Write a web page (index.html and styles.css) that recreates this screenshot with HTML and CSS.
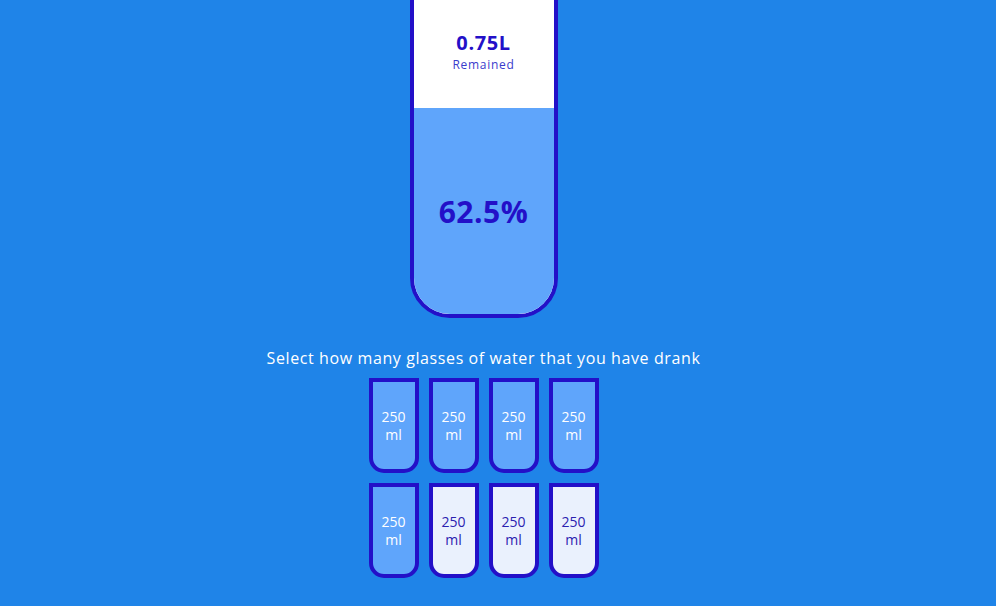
FILE: index.html
```html
<!DOCTYPE html>
<html>
<head>
<meta charset="utf-8">
<link rel="stylesheet" href="styles.css">
</head>
<body>
<div class="cup">
  <div class="remained">
    <span class="liters">0.75L</span>
    <small class="label">Remained</small>
  </div>
  <div class="percentage" style="height: 206px">62.5%</div>
</div>
<p class="text">Select how many glasses of water that you have drank</p>
<div class="cups">
  <div class="cup cup-small full">250 ml</div>
  <div class="cup cup-small full">250 ml</div>
  <div class="cup cup-small full">250 ml</div>
  <div class="cup cup-small full">250 ml</div>
  <div class="cup cup-small full">250 ml</div>
  <div class="cup cup-small">250 ml</div>
  <div class="cup cup-small">250 ml</div>
  <div class="cup cup-small">250 ml</div>
</div>
</body>
</html>
```
FILE: styles.css
```css
* { box-sizing: border-box; }
html, body { height: 100%; }
body {
  margin: 0;
  padding-right: 29px;
  background: #1f84e8;
  color: #ffffff;
  font-family: "Open Sans", "DejaVu Sans", sans-serif;
  display: flex;
  flex-direction: column;
  align-items: center;
  overflow: hidden;
}
.cup {
  background: #ffffff;
  border: 4px solid #2310c8;
  color: #2310c8;
  border-radius: 0 0 40px 40px;
  width: 148px;
  height: 340px;
  margin: -22px 0 30px;
  display: flex;
  flex-direction: column;
  overflow: hidden;
  flex-shrink: 0;
}
.remained {
  flex: 1;
  display: flex;
  flex-direction: column;
  align-items: center;
  justify-content: center;
  text-align: center;
  padding-top: 12px;
}
.liters {
  font-size: 20px;
  font-weight: 700;
  line-height: 28px;
  letter-spacing: 0.6px;
}
.label {
  font-size: 12px;
  line-height: 17px;
  letter-spacing: 0.7px;
  color: #3a3ccc;
  margin-top: -1px;
}
.percentage {
  background: #5fa5fb;
  display: flex;
  align-items: center;
  justify-content: center;
  font-size: 30px;
  font-weight: 700;
  letter-spacing: 0.5px;
  flex-shrink: 0;
}
.text {
  margin: 0 0 5px;
  font-size: 16px;
  line-height: 20px;
  letter-spacing: 0.6px;
  text-align: center;
}
.cups {
  width: 280px;
  display: flex;
  flex-wrap: wrap;
  justify-content: center;
  align-items: center;
}
.cup.cup-small {
  width: 50px;
  height: 95px;
  margin: 5px;
  border-width: 4px;
  border-radius: 0 0 15px 15px;
  background: #eaf1fd;
  color: #2a22b0;
  font-size: 14px;
  line-height: 18px;
  letter-spacing: 0;
  align-items: center;
  justify-content: center;
  text-align: center;
}
.cup.cup-small.full {
  background: #5fa5fb;
  color: #ffffff;
}
```
